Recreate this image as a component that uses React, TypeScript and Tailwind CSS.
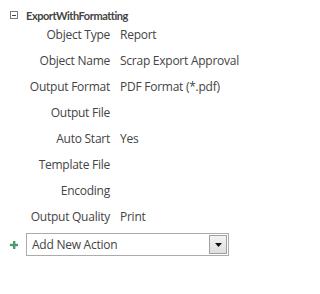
import React from "react";

const rows: [string, string][] = [
  ["Object Type", "Report"],
  ["Object Name", "Scrap Export Approval"],
  ["Output Format", "PDF Format (*.pdf)"],
  ["Output File", ""],
  ["Auto Start", "Yes"],
  ["Template File", ""],
  ["Encoding", ""],
  ["Output Quality", "Print"],
];

export default function App() {
  return (
    <div
      className="w-[320px] h-[294px] bg-white text-[#444444] text-[12px] leading-none tracking-[-0.25px]"
      style={{ fontFamily: '"Open Sans", "Noto Sans", sans-serif' }}
    >
      <div className="flex items-center pt-[8px] pl-[10px] h-[22px]">
        <div className="w-[8px] h-[8px] border border-[#7a7a7a] flex items-center justify-center">
          <div className="w-[4px] h-px bg-[#444]" />
        </div>
        <span
          className="ml-[8px] font-bold text-[11px] tracking-[-0.45px]"
          style={{ fontFamily: 'Lato, "Open Sans", sans-serif' }}
        >
          ExportWithFormatting
        </span>
      </div>
      <div className="flex flex-col">
        {rows.map(([k, v]) => (
          <div key={k} className="flex h-[26px] items-center">
            <div className="w-[110px] text-right">{k}</div>
            <div className="ml-[10px]">{v}</div>
          </div>
        ))}
      </div>
      <div className="flex items-center mt-[3px] h-[23px]">
        <div className="w-[26px] flex justify-center pl-[2px]">
          <svg width="8" height="8" viewBox="0 0 8 8">
            <rect x="3" y="0" width="2.4" height="8" fill="#4e9a6e" />
            <rect x="0" y="2.8" width="8" height="2.4" fill="#4e9a6e" />
          </svg>
        </div>
        <div className="w-[203px] h-[23px] border border-[#ababab] flex items-center justify-between">
          <span className="pl-[5px] text-[12px]">Add New Action</span>
          <div className="w-[18px] h-[19px] mr-px border border-[#a0a0a0] bg-gradient-to-b from-[#f4f4f4] to-[#dedede] flex items-center justify-center">
            <svg width="7" height="4" viewBox="0 0 7 4">
              <polygon points="0,0 7,0 3.5,4" fill="#111" />
            </svg>
          </div>
        </div>
      </div>
    </div>
  );
}
